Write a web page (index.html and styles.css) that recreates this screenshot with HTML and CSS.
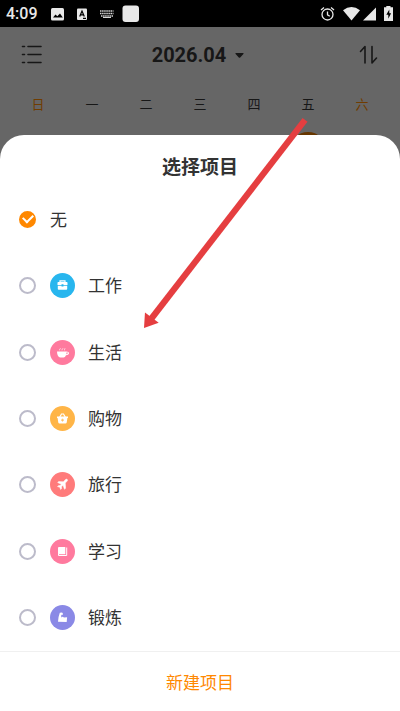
FILE: index.html
```html
<!DOCTYPE html>
<html lang="zh-CN">
<head>
<meta charset="utf-8">
<meta name="viewport" content="width=device-width, initial-scale=1">
<title>选择项目</title>
<link rel="stylesheet" href="styles.css">
</head>
<body>
<div class="screen">
  <header class="status">
    <span class="clock">4:09</span>
    <svg class="status-left" width="90" height="18" viewBox="0 0 90 18" aria-hidden="true">
      <rect x="0" y="3" width="13" height="12.500" rx="1.500" fill="#e8e8e8"/>
      <path d="M2 12.500l2.500-3 1.800 1.800L9 8.500l2.800 4z" fill="#000"/>
      <rect x="26" y="3.500" width="10" height="11.500" rx="1" fill="#e8e8e8"/>
      <path d="M28.700 11.500L31 6l2.300 5.500M29.500 9.800h3M32 13.300h3" fill="none" stroke="#000" stroke-width="1.200"/>
      <path d="M49 6h13.500M49 8.500h13.500M50 11h12" stroke="#d8d8d8" stroke-width="1.600" stroke-dasharray="1.500 .6"/>
      <path d="M52 12.500h8" stroke="#d8d8d8" stroke-width="1"/>
      <rect x="71.500" y=".5" width="16.500" height="16.500" rx="3" fill="#e8e8e8"/>
    </svg>
    <svg class="status-right" width="74" height="18" viewBox="0 0 74 18" aria-hidden="true">
      <g fill="none" stroke="#e8e8e8" stroke-width="1.300">
        <circle cx="7.500" cy="9.500" r="5.500"/>
        <path d="M7.500 6.500v3.300l2.300 1.500M1 5L4 2.500M14 5L11 2.500"/>
      </g>
      <path d="M23 5.200Q31.500-1.200 40 5.200L31.500 15.500z" fill="#e8e8e8"/>
      <path d="M56 2.500v13H43z" fill="#e8e8e8"/>
      <path d="M66.300 2.200V1h4.200v1.200H73V16h-9V2.200z" fill="#e8e8e8"/>
      <path d="M69.300 4.500l-3 5.300h2v4l2.800-5.500h-1.800z" fill="#000"/>
    </svg>
  </header>

  <section class="calendar">
    <div class="toolbar">
      <button class="menu" type="button" aria-label="菜单">
        <svg width="22" height="20" viewBox="0 0 22 20" fill="none" stroke="#171717" stroke-width="1.600" stroke-linecap="round">
          <path d="M1.500 1.500h2M7 1.500h13M1.500 9.500h2M7 9.500h13M1.500 17.500h2M7 17.500h13"/>
        </svg>
      </button>
      <button class="month" type="button">2026.04
        <svg width="9" height="5" viewBox="0 0 9 5" aria-hidden="true"><path d="M.8 0h7.400q.8.400.2 1L5.200 4.500q-.7.500-1.400 0L.6 1Q0 .4.800 0z" fill="#171717"/></svg>
      </button>
      <button class="sort" type="button" aria-label="排序">
        <svg width="20" height="20" viewBox="0 0 20 20" fill="none" stroke="#171717" stroke-width="1.600" stroke-linecap="round" stroke-linejoin="round">
          <path d="M1.500 6.500L6 1.500v16.500M13 1.500V18l4.500-5"/>
        </svg>
      </button>
    </div>
    <div class="week">
      <span class="weekend">日</span><span>一</span><span>二</span><span>三</span><span>四</span><span>五</span><span class="weekend">六</span>
    </div>
    <div class="days"><i class="today"></i></div>
  </section>

  <main class="sheet">
    <h1 class="title">选择项目</h1>
    <form class="projects" id="projects">
      <label class="project"><input class="radio" type="radio" name="project" checked><span class="name">无</span></label>
      <label class="project"><input class="radio" type="radio" name="project">
        <svg class="badge" viewBox="0 0 25 25" aria-hidden="true"><circle cx="12.500" cy="12.500" r="12.500" fill="#28b6ee"/><path d="M10 9V7.800h5V9" fill="none" stroke="#fff" stroke-width="1.200"/><path d="M8.300 9h8.400q.8 0 .8.800V12h-4v-.7h-2v.7h-4V9.800q0-.8.800-.8zM7.800 12.800h3.700v.8h2v-.8h3.700v3.200q0 .8-.8.800H8.600q-.8 0-.8-.8z" fill="#fff"/></svg>
        <span class="name">工作</span></label>
      <label class="project"><input class="radio" type="radio" name="project">
        <svg class="badge" viewBox="0 0 25 25" aria-hidden="true"><circle cx="12.500" cy="12.500" r="12.500" fill="#ff7a9e"/><path d="M7 11.500h9.500q2.500 0 2.500 1.500 0 2-3 2.300-1 2.200-2.300 2.200h-3.400Q7.200 17 7 11.500z" fill="#fff"/><path d="M16.500 12.500h1.300q.2 1.500-1.500 1.800z" fill="#ff7a9e"/><path d="M9.500 10.300q0-1.200 1-2M12 10.300q0-1.200 1-2M14.500 10.300q0-1.200.5-2" fill="none" stroke="#fff" stroke-width=".7"/></svg>
        <span class="name">生活</span></label>
      <label class="project"><input class="radio" type="radio" name="project">
        <svg class="badge" viewBox="0 0 25 25" aria-hidden="true"><circle cx="12.500" cy="12.500" r="12.500" fill="#ffb547"/><path d="M9.500 11.500l2-3.500h2l2 3.500" fill="none" stroke="#fff" stroke-width="1.200"/><path d="M7 10.500h11v1.600h-.6l-.7 4.400q-.2 1-1.200 1h-6q-1 0-1.200-1l-.7-4.400H7z" fill="#fff"/><path d="M12.500 12.700l.4 1 1 .4-1 .4-.4 1-.4-1-1-.4 1-.4z" fill="#ffb547" stroke="#ffb547" stroke-width=".4"/></svg>
        <span class="name">购物</span></label>
      <label class="project"><input class="radio" type="radio" name="project">
        <svg class="badge" viewBox="0 0 25 25" aria-hidden="true"><circle cx="12.500" cy="12.500" r="12.500" fill="#ff7b7b"/><path d="M17.300 7.500q.7.600-.1 1.500l-1.900 2.100.3 5.200-1.100 1-1.500-4-1.500 1.400v2l-.9.800-.8-2.200-2.300-.7.800-.9 1.700-.1 1.300-1.400-3.600-1.600.9-1 4.800.2 2.100-2.200q1.100-.9 1.800-.1z" fill="#fff" stroke="#fff" stroke-width=".5"/></svg>
        <span class="name">旅行</span></label>
      <label class="project"><input class="radio" type="radio" name="project">
        <svg class="badge" viewBox="0 0 25 25" aria-hidden="true"><circle cx="12.500" cy="12.500" r="12.500" fill="#ff7a9e"/><path d="M9 8h6.300v7.300H9q-1 0-1-.8V9q0-1 1-1z" fill="#fff"/><path d="M8.500 15v1.500h8.200V8.500" fill="none" stroke="#fff" stroke-width="1"/></svg>
        <span class="name">学习</span></label>
      <label class="project"><input class="radio" type="radio" name="project">
        <svg class="badge" viewBox="0 0 25 25" aria-hidden="true"><circle cx="12.500" cy="12.500" r="12.500" fill="#8a89e6"/><path d="M9.800 7.700l2.300-.3 1 1.500-.8 1.200-1-.3-.1 2.600q1.500-1.200 2.700 0l3.200-.1-.4 4.800-8.700-.4q.3-5.200 1.800-9z" fill="#fff"/></svg>
        <span class="name">锻炼</span></label>
    </form>
    <footer class="footer"><button class="create" type="button">新建项目</button></footer>
  </main>

  <svg class="arrow" width="168" height="212" viewBox="0 0 168 212" aria-hidden="true">
    <path d="M160.600 1L165.500 4.800 11.900 203.400 7 199.600z" fill="#e53e40"/>
    <path d="M2 211L3 195.500 16.700 205.700z" fill="#e53e40"/>
  </svg>
</div>
</body>
</html>
```
FILE: styles.css
```css
* {
  box-sizing: border-box;
}

body {
  margin: 0;
  background: #666;
  color: #333;
  font-family: Roboto, "Noto Sans CJK SC", sans-serif;
}

button {
  padding: 0;
  border: 0;
  background: none;
  color: inherit;
  font: inherit;
}

svg {
  display: block;
}

.screen {
  position: relative;
  display: flex;
  flex-direction: column;
  min-height: 100vh;
}

.status {
  display: flex;
  align-items: center;
  height: 27px;
  padding: 0 6px;
  background: #000;
  color: #e8e8e8;
}

.clock {
  font-size: 16px;
  font-weight: 500;
  line-height: 27px;
}

.status-left {
  margin-left: 13px;
}

.status-right {
  margin-left: auto;
}

.calendar {
  color: #171717;
}

.toolbar {
  display: flex;
  align-items: center;
  justify-content: space-between;
  height: 56px;
  padding: 0 21px;
}

.month {
  display: flex;
  align-items: center;
  gap: 9px;
  font-size: 20px;
  font-weight: 700;
}

.sort {
  display: flex;
  justify-content: flex-end;
  width: 26px;
}

.week,
.days {
  display: grid;
  grid-template-columns: repeat(7, 1fr);
  padding: 0 11px;
  justify-items: center;
}

.week {
  height: 49px;
  padding-top: 12px;
  font-size: 13px;
  line-height: 20px;
}

.weekend {
  color: #703c00;
}

.days {
  height: 3px;
  overflow: hidden;
}

.today {
  grid-column: 6;
  width: 36px;
  height: 36px;
  border-radius: 50%;
  background: #663600;
}

.sheet {
  display: flex;
  flex: 1;
  flex-direction: column;
  border-radius: 24px 24px 0 0;
  background: #fff;
}

.title {
  margin: 0;
  padding-top: 19px;
  font-size: 19px;
  font-weight: 700;
  line-height: 28px;
  text-align: center;
}

.projects {
  display: flex;
  flex: 1;
  flex-direction: column;
  padding-top: 4px;
}

.project {
  display: flex;
  flex: 1;
  align-items: center;
  gap: 13px;
  padding: 0 19px;
  font-size: 17px;
}

.name {
  padding-bottom: 2px;
}

.radio {
  display: grid;
  place-items: center;
  width: 17px;
  height: 17px;
  margin: 0 1px 0 0;
  border: 2px solid #bcbbca;
  border-radius: 50%;
  appearance: none;
}

.radio:checked {
  border-color: #ff8800;
  background: #ff8800;
}

.radio:checked::before {
  width: 8px;
  height: 5px;
  margin-bottom: 3px;
  border: solid #fff;
  border-width: 0 0 2px 2px;
  content: "";
  transform: rotate(-45deg);
}

.badge {
  width: 25px;
  height: 25px;
}

.footer {
  border-top: 1px solid #f0f0f0;
  text-align: center;
}

.create {
  width: 100%;
  height: 59px;
  padding-bottom: 1px;
  color: #ff8800;
  font-size: 17px;
}

.arrow {
  position: absolute;
  top: 117px;
  left: 142px;
  pointer-events: none;
}
```
